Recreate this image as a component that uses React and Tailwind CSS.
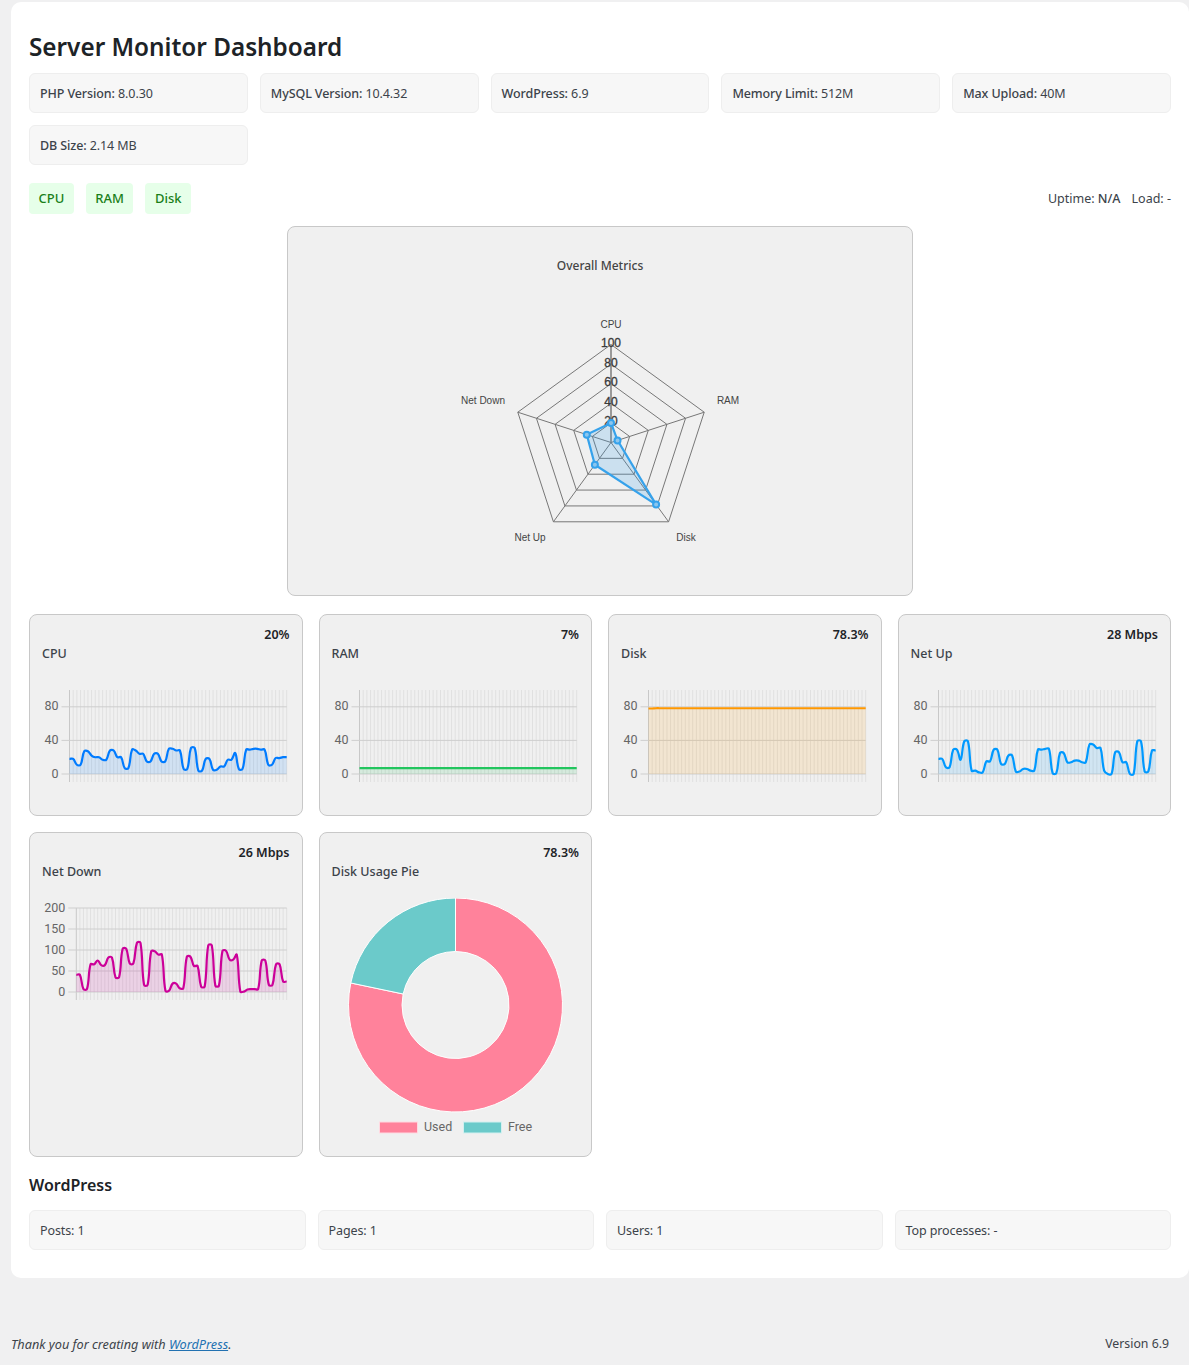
import React from "react";

const W = 248;
const H = 123;
const FONT = "Roboto, sans-serif";

const cpu = [18,18,11,11,27,27,22,20,20,17,17,28,28,20,20,7,7,29,28,24,24,15,15,24,24,15,15,30,30,28,28,6,6,31,31,4,4,18,18,5,5,9,9,17,17,25,6,6,29,29,30,30,29,29,11,11,19,19,20,20];
const netUp = [18,18,8,8,29,29,17,39,39,4,4,2,2,15,15,29,29,12,12,22,22,3,3,6,6,4,4,29,29,30,30,1,1,25,25,14,14,16,16,14,14,35,35,31,31,4,0,0,26,26,14,14,0,0,39,39,3,3,28,28];
const netDown = [41,41,7,7,66,66,75,64,64,82,82,35,35,103,103,68,68,117,117,17,17,97,97,89,89,3,3,20,20,9,9,84,84,62,62,13,13,111,111,15,15,98,98,77,77,89,1,1,6,7,7,7,75,75,17,17,66,66,25,25];
const ram = Array(60).fill(7);
const disk = [78,78,78.3,78.3,...Array(56).fill(78.3)];

function smoothPath(pts) {
  const t = 0.4;
  let d = `M${pts[0][0]} ${pts[0][1]}`;
  for (let i = 0; i < pts.length - 1; i++) {
    const p0 = pts[Math.max(i - 1, 0)];
    const p1 = pts[i];
    const p2 = pts[i + 1];
    const p3 = pts[Math.min(i + 2, pts.length - 1)];
    const d01 = Math.hypot(p1[0] - p0[0], p1[1] - p0[1]);
    const d12 = Math.hypot(p2[0] - p1[0], p2[1] - p1[1]);
    const d23 = Math.hypot(p3[0] - p2[0], p3[1] - p2[1]);
    const fa1 = d01 + d12 ? d12 / (d01 + d12) : 0;
    const fb1 = d12 + d23 ? d12 / (d12 + d23) : 0;
    const c1x = p1[0] + t * fa1 * (p2[0] - p0[0]);
    const c1y = p1[1] + t * fa1 * (p2[1] - p0[1]);
    const c2x = p2[0] - t * fb1 * (p3[0] - p1[0]);
    const c2y = p2[1] - t * fb1 * (p3[1] - p1[1]);
    d += `C${c1x.toFixed(2)} ${c1y.toFixed(2)} ${c2x.toFixed(2)} ${c2y.toFixed(2)} ${p2[0].toFixed(2)} ${p2[1].toFixed(2)}`;
  }
  return d;
}

function LineChart({ data, color, max = 100, ticks = [0, 40, 80], left = 27.5 }) {
  const right = 244.7;
  const top = 10;
  const bottom = 94;
  const n = data.length;
  const xs = (i) => left + ((right - left) * i) / (n - 1);
  const ys = (v) => bottom - ((bottom - top) * v) / max;
  const pts = data.map((v, i) => [xs(i), ys(v)]);
  const line = smoothPath(pts);
  const area = `${line}L${right} ${bottom}L${left} ${bottom}Z`;
  return (
    <svg className="block mt-[17px]" width={W} height={H} viewBox={`0 0 ${W} ${H}`}>
      {data.map((_, i) => (
        <line key={i} x1={xs(i)} x2={xs(i)} y1={top} y2={102} stroke={i === 0 ? "#c8c8c8" : "#e0e0e0"} strokeWidth="1" />
      ))}
      {ticks.map((t) => (
        <g key={t}>
          <line x1={left - 8} x2={right} y1={ys(t)} y2={ys(t)} stroke="#cecece" strokeWidth="1" />
          <text x={left - 11} y={ys(t) + 3.5} textAnchor="end" fontSize="12.5" fill="#666" fontFamily={FONT}>{t}</text>
        </g>
      ))}
      <path d={area} fill={color} fillOpacity="0.13" />
      <path d={line} fill="none" stroke={color} strokeWidth="2.2" />
    </svg>
  );
}

function polar(cx, cy, r, i) {
  const a = -Math.PI / 2 + (i * 2 * Math.PI) / 5;
  return [cx + r * Math.cos(a), cy + r * Math.sin(a)];
}

function Radar() {
  const cx = 323;
  const cy = 215.5;
  const R = 98;
  const vals = [20, 7, 78.3, 28, 26];
  const poly = vals.map((v, i) => polar(cx, cy, (R * v) / 100, i));
  const labels = [
    ["CPU", 323, 101],
    ["RAM", 440, 177],
    ["Disk", 398, 314],
    ["Net Up", 242, 314],
    ["Net Down", 195, 177],
  ];
  const ring = (r) => [0, 1, 2, 3, 4].map((i) => polar(cx, cy, r, i).join(",")).join(" ");
  return (
    <svg className="block" width="624" height="368" viewBox="0 0 624 368">
      <text x="312" y="43" textAnchor="middle" fontSize="12" fontWeight="500" fill="#444" fontFamily='"Noto Sans", sans-serif'>Overall Metrics</text>
      {[20, 40, 60, 80, 100].map((p) => (
        <polygon key={p} points={ring((R * p) / 100)} fill="none" stroke="#777" strokeWidth="1" />
      ))}
      {[0, 1, 2, 3, 4].map((i) => {
        const [x, y] = polar(cx, cy, R, i);
        return <line key={i} x1={cx} y1={cy} x2={x} y2={y} stroke={i === 0 ? "#999" : "#777"} strokeWidth={i === 0 ? 2 : 1} />;
      })}
      {[20, 40, 60, 80, 100].map((p) => (
        <text key={p} x={cx} y={cy - (R * p) / 100 + 2.5} textAnchor="middle" fontSize="12" fill="#333" stroke="#444" strokeWidth="0.3" fontFamily='"Liberation Sans", sans-serif'>{p}</text>
      ))}
      <polygon points={poly.map((p) => p.join(",")).join(" ")} fill="#36a2eb" fillOpacity="0.2" stroke="#36a2eb" strokeWidth="2.2" />
      {poly.map((p, i) => (
        <circle key={i} cx={p[0]} cy={p[1]} r="3" fill="#8cc6ee" stroke="#36a2eb" strokeWidth="2" />
      ))}
      {labels.map(([t, x, y]) => (
        <text key={t} x={x} y={y} textAnchor="middle" fontSize="10" fill="#444" fontFamily='"Liberation Sans", sans-serif'>{t}</text>
      ))}
    </svg>
  );
}

function arc(cx, cy, r0, r1, a0, a1) {
  const pt = (r, a) => [cx + r * Math.sin(a), cy - r * Math.cos(a)];
  const large = a1 - a0 > Math.PI ? 1 : 0;
  const [x0, y0] = pt(r1, a0);
  const [x1, y1] = pt(r1, a1);
  const [x2, y2] = pt(r0, a1);
  const [x3, y3] = pt(r0, a0);
  return `M${x0} ${y0}A${r1} ${r1} 0 ${large} 1 ${x1} ${y1}L${x2} ${y2}A${r0} ${r0} 0 ${large} 0 ${x3} ${y3}Z`;
}

function Donut() {
  const cx = 123.5;
  const cy = 107;
  const split = 2 * Math.PI * 0.783;
  return (
    <svg className="block mt-[17px]" width={W} height="246" viewBox={`0 0 ${W} 246`}>
      <path d={arc(cx, cy, 53.5, 107, 0, split)} fill="#ff829b" stroke="#fff" strokeWidth="1" />
      <path d={arc(cx, cy, 53.5, 107, split, 2 * Math.PI)} fill="#6bcaca" stroke="#fff" strokeWidth="1" />
      <rect x="47.5" y="224" width="38" height="11" fill="#ff829b" stroke="#ffd9e1" strokeWidth="1" />
      <text x="92" y="233" fontSize="12.5" fill="#666" fontFamily={FONT}>Used</text>
      <rect x="131.5" y="224" width="38" height="11" fill="#6bcaca" stroke="#d3f0f0" strokeWidth="1" />
      <text x="176" y="233" fontSize="12.5" fill="#666" fontFamily={FONT}>Free</text>
    </svg>
  );
}

function Info({ label, value }) {
  return (
    <div className="h-10 flex items-center px-[10px] pt-[2px] bg-[#f7f7f7] border border-[#eeeeee] rounded-md text-[12.5px] tracking-[-0.1px] text-[#3c434a]">
      {label && <span className="font-medium">{label}&nbsp;</span>}
      <span>{value}</span>
    </div>
  );
}

function Chip({ children }) {
  return (
    <span className="h-[31px] flex items-center px-[9.5px] rounded bg-[#e6ffe9] text-[#1a7f1a] text-[13px] font-medium">{children}</span>
  );
}

function Card({ title, value, children }) {
  return (
    <div className="bg-[#f0f0f0] border border-[#c8c8c8] rounded-lg p-3">
      <div className="text-right text-[12.5px] font-semibold leading-[15px] text-[#1d2327]">{value}</div>
      <div className="mt-[3px] text-[12.5px] font-medium leading-[18px] text-[#3c434a]">{title}</div>
      {children}
    </div>
  );
}

export default function App() {
  return (
    <div className="min-h-[1365px] bg-[#f0f0f1] pl-[11px] pt-[2px] text-[#3c434a] font-['Noto_Sans',sans-serif]">
      <div className="bg-white rounded-[10px] pt-[29px] pb-7 pl-[18px] pr-[18px]">
        <h1 className="text-[24.3px] leading-[32px] font-semibold text-[#1d2327]">Server Monitor Dashboard</h1>
        <div className="grid grid-cols-5 gap-3 mt-[10px]">
          <Info label="PHP Version:" value="8.0.30" />
          <Info label="MySQL Version:" value="10.4.32" />
          <Info label="WordPress:" value="6.9" />
          <Info label="Memory Limit:" value="512M" />
          <Info label="Max Upload:" value="40M" />
          <Info label="DB Size:" value="2.14 MB" />
        </div>
        <div className="flex items-center justify-between mt-[18px]">
          <div className="flex gap-3">
            <Chip>CPU</Chip>
            <Chip>RAM</Chip>
            <Chip>Disk</Chip>
          </div>
          <div className="text-[12.5px] flex gap-[11px] pt-[2px]">
            <span>Uptime: <span className="font-medium">N/A</span></span>
            <span>Load: -</span>
          </div>
        </div>
        <div className="w-[626px] mx-auto mt-3 bg-[#f0f0f0] border border-[#c8c8c8] rounded-lg">
          <Radar />
        </div>
        <div className="grid grid-cols-4 gap-4 mt-[18px]">
          <Card title="CPU" value="20%"><LineChart data={cpu} color="#007bff" /></Card>
          <Card title="RAM" value="7%"><LineChart data={ram} color="#22c55e" /></Card>
          <Card title="Disk" value="78.3%"><LineChart data={disk} color="#ff9800" /></Card>
          <Card title="Net Up" value="28 Mbps"><LineChart data={netUp} color="#0099ff" /></Card>
          <Card title="Net Down" value="26 Mbps"><LineChart data={netDown} color="#cc0099" max={200} ticks={[0, 50, 100, 150, 200]} left={34.3} /></Card>
          <Card title="Disk Usage Pie" value="78.3%"><Donut /></Card>
        </div>
        <h2 className="mt-4 text-[16px] leading-[24px] font-semibold text-[#1d2327]">WordPress</h2>
        <div className="grid grid-cols-4 gap-3 mt-[13px]">
          <Info value="Posts: 1" />
          <Info value="Pages: 1" />
          <Info value="Users: 1" />
          <Info value="Top processes: -" />
        </div>
      </div>
      <div className="flex justify-between items-center mt-[57px] pr-5 text-[12.7px] leading-[18px]">
        <span className="italic">Thank you for creating with <a href="#" className="text-[#2271b1] underline">WordPress</a>.</span>
        <span className="text-[12.3px]">Version 6.9</span>
      </div>
    </div>
  );
}
